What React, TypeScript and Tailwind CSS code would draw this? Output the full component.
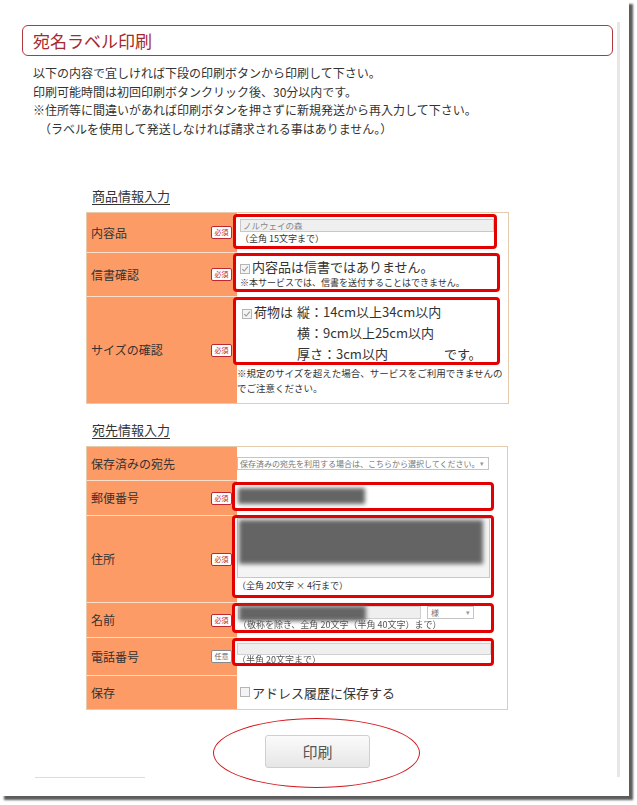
import React from 'react';

const RED_BOX = 'border-[3px] border-[#e30000] rounded-[4px] bg-white';

const Badge: React.FC<{ optional?: boolean }> = ({ optional }) => (
  <span
    className={
      optional
        ? 'flex items-center justify-center w-[21px] h-[13px] border border-[#8a8a8a] rounded-[2px] bg-white text-[7px] leading-none text-[#666]'
        : 'flex items-center justify-center w-[21px] h-[13px] border border-[#c0282d] rounded-[2px] bg-white text-[7px] leading-none text-[#c0282d]'
    }
  >
    {optional ? '任意' : '必須'}
  </span>
);

const CheckBox: React.FC<{ checked?: boolean }> = ({ checked }) => (
  <span className="inline-flex items-center justify-center w-[10px] h-[10px] border border-[#b5b5b5] bg-[#f4f4f4] mr-[2px] align-[-1px]">
    {checked && (
      <svg viewBox="0 0 10 10" className="w-[8px] h-[8px]">
        <path d="M1.5 5.2 L4 7.5 L8.5 2" fill="none" stroke="#9a9a9a" strokeWidth="1.4" />
      </svg>
    )}
  </span>
);

const Label: React.FC<{ text: string; badge?: 'req' | 'opt'; className: string; first?: boolean }> = ({
  text,
  badge,
  className,
  first,
}) => (
  <div
    className={
      (first ? '' : 'border-t border-[#fde0cc] ') +
      'w-[150px] shrink-0 bg-[#fd9b67] flex items-center justify-between pl-[4px] pr-[5px] text-[12px] text-[#333] ' +
      className
    }
  >
    <span>{text}</span>
    {badge === 'req' && <Badge />}
    {badge === 'opt' && <Badge optional />}
  </div>
);

const Blur: React.FC<{ className: string }> = ({ className }) => (
  <div className={'bg-[#646464] blur-[2px] ' + className} />
);

const App: React.FC = () => {
  return (
    <div className="w-[637px] h-[805px] bg-white font-['Noto_Sans_CJK_JP',sans-serif] text-[#333]">
      <div className="w-[629px] h-[796px] bg-white shadow-[4px_4px_2px_#5c5c5c]">
        {/* page frame */}
        <div className="mt-[22px] w-[620px] h-[755px] border-r-[3px] border-[#e7e7e3] pt-[3px] inline-block align-top">
          <div className="ml-[22px] w-[591px] h-[31px] border-[1.5px] border-[#b2383c] rounded-[6px] flex items-center pl-[10px] text-[17px] text-[#a5292e]">
            宛名ラベル印刷
          </div>

          <div className="mt-[8px] ml-[33px] text-[12px] leading-[18.6px] text-[#333] whitespace-nowrap">
            <p>以下の内容で宜しければ下段の印刷ボタンから印刷して下さい。</p>
            <p>印刷可能時間は初回印刷ボタンクリック後、30分以内です。</p>
            <p>※住所等に間違いがあれば印刷ボタンを押さずに新規発送から再入力して下さい。</p>
            <p>　（ラベルを使用して発送しなければ請求される事はありません。）</p>
          </div>

          {/* 商品情報 */}
          <div className="mt-[49px] ml-[92px] text-[13px] leading-[18px] underline underline-offset-[3px]">商品情報入力</div>
          <div className="mt-[7px] ml-[86px] w-[423px] border border-[#e7cbad]">
            <div className="flex">
              <Label first text="内容品" badge="req" className="h-[39px]" />
              <div className="flex-1">
                <div className={RED_BOX + ' mt-[1px] ml-[-4px] w-[264px] h-[35px] pl-[4px] pt-[2px]'}>
                  <div className="h-[13px] border border-[#c8c8c8] bg-[#efefef] text-[8.5px] leading-[11px] text-[#888] pl-[2px]">
                    ノルウェイの森
                  </div>
                  <div className="text-[9px] leading-[14px] mt-[0px]">（全角 15文字まで）</div>
                </div>
              </div>
            </div>
            <div className="flex">
              <Label text="信書確認" badge="req" className="h-[44px]" />
              <div className="flex-1">
                <div className={RED_BOX + ' mt-[1px] ml-[-4px] w-[267px] h-[39px] pl-[4px] pt-[1px]'}>
                  <div className="text-[13px] leading-[19px] whitespace-nowrap">
                    <CheckBox checked />
                    内容品は信書ではありません。
                  </div>
                  <div className="text-[9px] leading-[13px] whitespace-nowrap">※本サービスでは、信書を送付することはできません。</div>
                </div>
              </div>
            </div>
            <div className="flex">
              <Label text="サイズの確認" badge="req" className="h-[107px]" />
              <div className="flex-1">
                <div className={RED_BOX + ' mt-[1px] ml-[-4px] w-[267px] h-[68px] pl-[6px] pt-[1px] flex text-[13px] leading-[21px] whitespace-nowrap'}>
                  <div>
                    <CheckBox checked />
                    荷物は
                  </div>
                  <div className="ml-[4px]">
                    <div>縦：14cm以上34cm以内</div>
                    <div>横：9cm以上25cm以内</div>
                    <div>
                      厚さ：3cm以内<span className="ml-[56px]">です。</span>
                    </div>
                  </div>
                </div>
                <div className="mt-[1px] text-[9.5px] leading-[15px] whitespace-nowrap">
                  ※規定のサイズを超えた場合、サービスをご利用できませんの
                  <br />
                  でご注意ください。
                </div>
              </div>
            </div>
          </div>

          {/* 宛先情報 */}
          <div className="mt-[17px] ml-[92px] text-[13px] leading-[18px] underline underline-offset-[3px]">宛先情報入力</div>
          <div className="mt-[7px] ml-[86px] w-[422px] border border-[#e7cbad]">
            <div className="flex">
              <Label first text="保存済みの宛先" className="h-[33px]" />
              <div className="flex-1 flex items-center">
                <div className="w-[252px] h-[13px] border border-[#c4c4c4] bg-white flex items-center justify-between pl-[2px] pr-[4px] text-[8px] leading-none text-[#777] whitespace-nowrap">
                  <span>保存済みの宛先を利用する場合は、こちらから選択してください。</span>
                  <span className="text-[7px] text-[#999]">▾</span>
                </div>
              </div>
            </div>
            <div className="flex">
              <Label text="郵便番号" badge="req" className="h-[35px]" />
              <div className="flex-1">
                <div className={RED_BOX + ' mt-[2px] ml-[-5px] w-[262px] h-[29px] pl-[3px] pt-[3px]'}>
                  <Blur className="w-[127px] h-[16px]" />
                </div>
              </div>
            </div>
            <div className="flex">
              <Label text="住所" badge="req" className="h-[87px]" />
              <div className="flex-1">
                <div className={RED_BOX + ' mt-[0px] ml-[-5px] w-[262px] h-[83px] pl-[2px] pt-[0px]'}>
                  <div className="w-[253px] h-[60px] border border-[#c8c8c8] bg-[#f4f4f4] pl-[1px] pt-[1px]">
                    <Blur className="w-[244px] h-[44px]" />
                  </div>
                  <div className="text-[9px] leading-[16px]">（全角 20文字 × 4行まで）</div>
                </div>
              </div>
            </div>
            <div className="flex">
              <Label text="名前" badge="req" className="h-[35px]" />
              <div className="flex-1">
                <div className={RED_BOX + ' mt-[1px] ml-[-5px] w-[262px] h-[30px] pl-[3px] pt-[0px]'}>
                  <div className="flex">
                    <div className="relative w-[183px] h-[13px] border border-[#d0d0d0] bg-[#efefef]">
                      <Blur className="absolute left-0 top-[-1px] w-[127px] h-[15px]" />
                    </div>
                    <div className="ml-[6px] w-[47px] h-[13px] border border-[#c4c4c4] bg-white flex items-center justify-between px-[3px] text-[8px] leading-none text-[#777]">
                      <span>様</span>
                      <span className="text-[7px] text-[#999]">▾</span>
                    </div>
                  </div>
                  <div className="text-[9px] leading-[12px] text-[#555] blur-[0.4px] whitespace-nowrap">
                    （敬称を除き、全角 20文字（半角 40文字）まで）
                  </div>
                </div>
              </div>
            </div>
            <div className="flex">
              <Label text="電話番号" badge="opt" className="h-[38px]" />
              <div className="flex-1">
                <div className={RED_BOX + ' mt-[1px] ml-[-5px] w-[262px] h-[28px] pl-[2px] pt-[2px]'}>
                  <div className="h-[12px] border border-[#d0d0d0] bg-[#efefef]" />
                  <div className="text-[9px] leading-[10px] text-[#555] blur-[0.3px]">（半角 20文字まで）</div>
                </div>
              </div>
            </div>
            <div className="flex">
              <Label text="保存" className="h-[34px]" />
              <div className="flex-1 flex items-center pl-[3px] text-[13px] whitespace-nowrap">
                <CheckBox />
                アドレス履歴に保存する
              </div>
            </div>
          </div>

          {/* print button */}
          <div className="relative mt-[25px] ml-[265px] w-[105px] h-[33px]">
            <button className="w-full h-full border border-[#cfcfcf] rounded-[3px] bg-gradient-to-b from-[#fbfbfb] to-[#e6e6e6] text-[15px] text-[#555] font-['Noto_Sans_CJK_JP',sans-serif]">
              印刷
            </button>
            <div className="absolute left-[-52px] top-[-17px] w-[207px] h-[70px] rounded-[50%] border-[1.5px] border-[#d3161c] pointer-events-none" />
          </div>
        </div>
        <div className="ml-[35px] w-[110px] h-px bg-[#dcdcdc]" />
      </div>
    </div>
  );
};

export default App;
